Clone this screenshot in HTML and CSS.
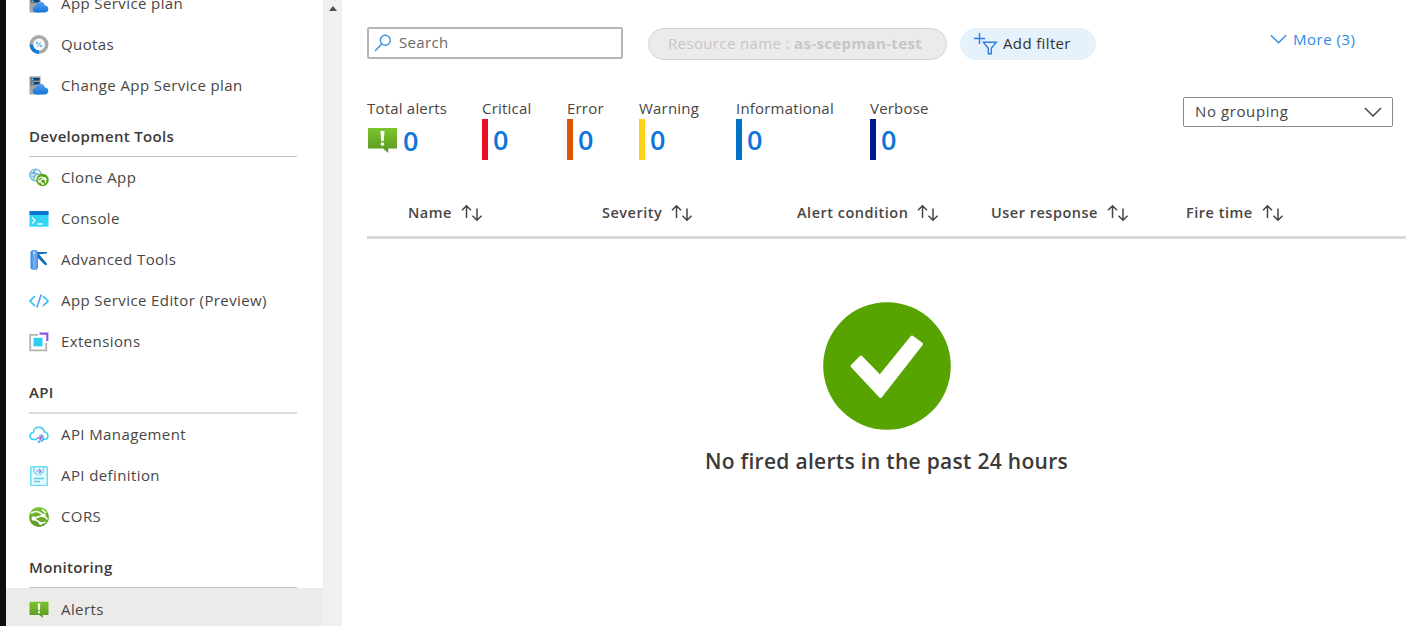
FILE: index.html
```html
<!DOCTYPE html>
<html lang="en">
<head>
<meta charset="utf-8">
<title>Alerts</title>
<link rel="stylesheet" href="styles.css">
</head>
<body>
<svg class="defs" width="0" height="0" aria-hidden="true">
  <defs>
    <linearGradient id="cloud" x1="0" y1="0" x2="0" y2="1"><stop offset="0" stop-color="#5ea0ef"/><stop offset="1" stop-color="#0f75d8"/></linearGradient>
    <linearGradient id="green" x1="0" y1="0" x2="0" y2="1"><stop offset="0" stop-color="#7ac52c"/><stop offset="1" stop-color="#5c9624"/></linearGradient>
    <linearGradient id="tube" x1="0" y1="0" x2="1" y2="0"><stop offset="0" stop-color="#2f7fe0"/><stop offset=".5" stop-color="#7db4f5"/><stop offset="1" stop-color="#3f8be6"/></linearGradient>
    <linearGradient id="steel" x1="0" y1="0" x2="0" y2="1"><stop offset="0" stop-color="#8a8d90"/><stop offset="1" stop-color="#a9abad"/></linearGradient>
    <symbol id="plan" viewBox="0 0 20 20">
      <path d="M.5 .5h11v18H.5z" fill="url(#steel)"/><path d="M2 2h8.500v2.500H2zM2 6h8.500v2.500H2z" fill="#143e6b"/><path d="M2.500 2.500h2v1.500h-2zM2.500 6.500h2v1.500h-2z" fill="#50e6ff"/>
      <path d="M7.500 18.500C5 18.500 3.800 16.900 3.800 15.200c0-1.900 1.300-3 3-3.200C7.400 9.200 9.300 7.800 11.500 7.800c2.400 0 4 1.500 4.500 3.800 2 .2 3.300 1.500 3.300 3.400 0 2-1.500 3.500-3.600 3.500z" fill="url(#cloud)"/>
    </symbol>
    <symbol id="alert" viewBox="0 0 30 26">
      <path d="M.5 1h29v20.500h-8.700V26l-5.300-4.500H.5z" fill="url(#green)"/><path d="M13 4h4l-.7 10h-2.600zM13.400 15.500h3.200v3.100h-3.200z" fill="#fff"/>
    </symbol>
    <symbol id="sort" viewBox="0 0 22 18">
      <path d="M5.500 14V2M1 6.200 5.500 1.700 10 6.200M16 4.500v11.500M11.500 11.800l4.500 4.500 4.500-4.500" fill="none" stroke="#444" stroke-width="1.500"/>
    </symbol>
    <symbol id="chev" viewBox="0 0 18 10"><path d="M1 1l8 8 8-8" fill="none" stroke="currentColor" stroke-width="1.500"/></symbol>
  </defs>
</svg>
<div class="app">
  <div class="edge"></div>
  <nav class="side">
    <div class="items first">
      <a class="item"><svg class="ico"><use href="#plan"/></svg><span>App Service plan</span></a>
      <a class="item"><svg class="ico" viewBox="0 0 20 20"><circle cx="10" cy="9.500" r="7.700" fill="none" stroke="#a9a9a9" stroke-width="3.600"/><path d="M2.300 9.500A7.700 7.700 0 0 0 10 17.200" fill="none" stroke="#0f7bd8" stroke-width="3.600"/><path d="M11.800 6.800 8.200 12" stroke="#4aa7ee"/><circle cx="8" cy="8" r="1" fill="none" stroke="#4aa7ee" stroke-width=".9"/><circle cx="12" cy="10.900" r="1" fill="none" stroke="#4aa7ee" stroke-width=".9"/></svg><span>Quotas</span></a>
      <a class="item"><svg class="ico"><use href="#plan"/></svg><span>Change App Service plan</span></a>
    </div>
    <h2 class="group">Development Tools</h2>
    <div class="items">
      <a class="item"><svg class="ico" viewBox="0 0 20 20"><circle cx="6.500" cy="7" r="5.700" fill="#fff" stroke="#76b9dc" stroke-width="1.500"/><path d="M1.500 6.500 7 2M4 11.500l3.500-6 4 1.500M2 8l4 .5" fill="none" stroke="#76b9dc" stroke-width="1.500"/><circle cx="5" cy="5" r="1.600" fill="#59aed8"/><circle cx="13.500" cy="12" r="6.200" fill="#5aa51c"/><path d="M8.500 11.500c3-3.500 5.500-3 9 .5M10 13.200l4.500-2.700M10 13.200l4.500 3M16.300 11.500l.2 3.500" fill="none" stroke="#fff" stroke-width="1.100"/><circle cx="10.500" cy="13.200" r="1.300" fill="#fff"/><circle cx="16" cy="11" r="1.400" fill="#fff"/><circle cx="14" cy="16" r="1" fill="#fff"/></svg><span>Clone App</span></a>
      <a class="item"><svg class="ico" viewBox="0 0 20 20"><path d="M.5 2.500h19v15.200H.5z" fill="#32d4f5"/><path d="M.5 2h19v4H.5z" fill="#0f75d0"/><path d="M3 8.500l3 3-3 3M8.500 15h5" fill="none" stroke="#fff" stroke-width="1.300"/></svg><span>Console</span></a>
      <a class="item"><svg class="ico" viewBox="0 0 20 20"><path d="M7 2h11v1.500L10 4.300l8.500 10-2.300 1L8 7z" fill="#0f6cbd"/><rect x="1.500" width="7.500" height="20" rx="3" fill="url(#tube)"/><circle cx="5.200" cy="3" r="1.300" fill="#b9dafa"/></svg><span>Advanced Tools</span></a>
      <a class="item"><svg class="ico" viewBox="0 0 20 20" fill="none"><path d="M6 5 1 10l5 5M14 5l5 5-5 5" stroke="#35bfec" stroke-width="1.700"/><path d="M12.200 3.500 7.800 16.500" stroke="#5a9ff0" stroke-width="1.700"/></svg><span>App Service Editor (Preview)</span></a>
      <a class="item"><svg class="ico" viewBox="0 0 20 20"><path d="M9 2.800H1.200v15.500h16V11" fill="none" stroke="#b1b1b1" stroke-width="1.800"/><path d="M4.500 5.800h9v8.600h-9z" fill="#2ccff0"/><path d="M10.500 1.700H18.300V9" fill="none" stroke="#8f56dc" stroke-width="2.200"/></svg><span>Extensions</span></a>
    </div>
    <h2 class="group tall">API</h2>
    <div class="items">
      <a class="item"><svg class="ico" viewBox="0 0 20 20" fill="none"><path d="M8 14.500H5C2.600 14.500 1 13 1 11s1.400-3.400 3.300-3.600C4.700 4.300 6.900 2.300 9.800 2.300c3 0 4.900 1.800 5.400 4.500 2.300.3 3.700 1.800 3.700 3.900 0 2.200-1.600 3.800-3.900 3.800h-1" stroke="#35cdec" stroke-width="1.500"/><path d="M7.500 13h5M10.300 10.500l2.500 2.500-2.500 2.500" stroke="#a070dc" stroke-width="1.300"/><path d="M11.500 10c3.800.3 3.800 6-.2 6.300" stroke="#4fa6e9" stroke-width="1.300"/><circle cx="9.800" cy="17" r="1.200" fill="#4fc5ed"/></svg><span>API Management</span></a>
      <a class="item"><svg class="ico" viewBox="0 0 20 20" fill="none"><rect x="1.800" y=".8" width="16.500" height="18.700" rx="1" fill="#e6fafe" stroke="#6bdcf1" stroke-width="1.500"/><path d="M5 1v5l4 3M14.500 1v5l-4 3" stroke="#6bdcf1" stroke-width="1.400"/><path d="M7 5h5M10 3l2.300 2.200L10 7.300" stroke="#9b83dc" stroke-width="1.200"/><path d="M5 12.500h10M5 15.500h6" stroke="#5dcaea" stroke-width="1.400"/></svg><span>API definition</span></a>
      <a class="item"><svg class="ico" viewBox="0 0 20 20"><circle cx="10" cy="10" r="10" fill="url(#green)"/><path d="M2 6.500C6 3 10 4 14.500 8.500M4.500 11.500l9-3M4.500 11.500l8 5M15 8.500l3.500 4M13 2.500 17 6M12.500 16.500l4-1.500" fill="none" stroke="#fff" stroke-width="1.500"/><circle cx="14.500" cy="8.500" r="2.100" fill="#fff"/><circle cx="4.700" cy="11.500" r="2.200" fill="#fff"/><circle cx="11.500" cy="16.300" r="1.600" fill="#fff"/></svg><span>CORS</span></a>
    </div>
    <h2 class="group">Monitoring</h2>
    <a class="item active"><svg class="ico small"><use href="#alert"/></svg><span>Alerts</span></a>
  </nav>
  <div class="scroll"><i></i></div>
  <main class="main">
    <div class="toolbar">
      <div class="search"><svg width="18" height="18" viewBox="0 0 18 18" fill="none" stroke="#3795e4" stroke-width="1.400"><circle cx="11.300" cy="6.300" r="5"/><path d="M7.800 9.800 1 17"/></svg><span>Search</span></div>
      <div class="pill res"><span>Resource name : </span><b>as-scepman-test</b></div>
      <div class="pill add"><svg width="25" height="22" viewBox="0 0 25 22" fill="none" stroke="#2f7de1" stroke-width="1.400"><path d="M6.500 0v11M1 5.500h11M10.300 9.200h13l-5 6v5.500h-3v-5.500z"/></svg><span>Add filter</span></div>
      <div class="more"><svg width="17" height="10"><use href="#chev"/></svg><span>More (3)</span></div>
    </div>
    <div class="summary">
      <div class="stats">
        <div class="stat total"><span>Total alerts</span><div class="num"><svg width="31" height="26"><use href="#alert"/></svg><b>0</b></div></div>
        <div class="stat critical"><span>Critical</span><div class="num"><b>0</b></div></div>
        <div class="stat error"><span>Error</span><div class="num"><b>0</b></div></div>
        <div class="stat warning"><span>Warning</span><div class="num"><b>0</b></div></div>
        <div class="stat info"><span>Informational</span><div class="num"><b>0</b></div></div>
        <div class="stat verbose"><span>Verbose</span><div class="num"><b>0</b></div></div>
      </div>
      <div class="select"><span>No grouping</span><svg width="18" height="10"><use href="#chev"/></svg></div>
    </div>
    <div class="thead">
      <div><span>Name</span><svg class="sort"><use href="#sort"/></svg></div>
      <div><span>Severity</span><svg class="sort"><use href="#sort"/></svg></div>
      <div><span>Alert condition</span><svg class="sort"><use href="#sort"/></svg></div>
      <div><span>User response</span><svg class="sort"><use href="#sort"/></svg></div>
      <div><span>Fire time</span><svg class="sort"><use href="#sort"/></svg></div>
    </div>
    <div class="empty">
      <svg width="128" height="128" viewBox="0 0 128 128"><circle cx="64" cy="64" r="63.800" fill="#57a300"/><path d="M38 55 57 74.500 89 35 98.500 42 57.500 94.500 29 64z" fill="#fff" stroke="#fff" stroke-width="3" stroke-linejoin="round"/></svg>
      <p>No fired alerts in the past 24 hours</p>
    </div>
  </main>
</div>
</body>
</html>
```

FILE: styles.css
```css
* { box-sizing: border-box; }
body { margin: 0; height: 626px; overflow: hidden; background: #fff; color: #484644; font: 15px/20px "Open Sans", "Noto Sans", sans-serif; }
.defs { display: block; height: 0; }
.app { display: flex; height: 626px; overflow: hidden; }
.edge { width: 6px; background: #0d0d0d; }
.side { width: 317px; flex: none; letter-spacing: .4px; }
.items.first { margin-top: -17px; }
.item { display: flex; align-items: center; gap: 12px; height: 41px; padding-left: 23px; white-space: nowrap; }
.item span { padding-bottom: 2px; }
.ico { width: 20px; height: 20px; flex: none; }
.ico.small { height: 17px; }
.group { margin: 0 26px 0 23px; height: 51px; padding-top: 20px; border-bottom: 1px solid #c4c4c4; font-size: 15px; line-height: 20px; font-weight: 600; color: #3b3a39; letter-spacing: .33px; }
.group.tall { height: 52px; border-bottom: 2px solid #dcdcdc; }
.item.active { height: 43px; background: #edebe9; }
.scroll { width: 19px; flex: none; background: #f0f0f0; }
.scroll i { display: block; margin: 6px auto 0; width: 8px; border: 4px solid transparent; border-top: 0; border-bottom: 5px solid #505050; }
.main { flex: 1; padding: 26px 15px 0 25px; }
.toolbar { display: flex; height: 34px; letter-spacing: .36px; }
.search { display: flex; align-items: center; gap: 7px; width: 256px; height: 32px; margin-top: 1px; padding: 0 5px; border: 2px solid #b8b6b4; border-radius: 2px; color: #6b6967; }
.search span { margin-top: -3px; }
.pill { display: flex; align-items: center; height: 32px; margin-top: 2px; border-radius: 16px; white-space: pre; }
.pill span, .pill b { padding-bottom: 2px; }
.res { width: 299px; margin-left: 25px; padding-left: 19px; border: 1px solid #d4d4d4; background: #ebebeb; color: #c8c6c4; }
.add { width: 136px; margin-left: 13px; padding-left: 13px; gap: 5px; background: #e5f1fb; color: #323130; }
.more { display: flex; align-items: center; gap: 6px; height: 28px; margin-left: 174px; color: #2f8be0; white-space: nowrap; letter-spacing: .5px; }
.more svg { margin-top: -3px; }
.more span { padding-bottom: 2px; }
.summary { display: flex; justify-content: space-between; margin-top: 37px; height: 66px; padding-right: 13px; }
.stats { display: grid; grid-template-columns: 115px 85px 72px 97px 134px 70px; }
.stat { white-space: nowrap; letter-spacing: .2px; }
.stat > span { display: block; height: 22px; line-height: 22px; }
.num { display: flex; align-items: center; height: 41px; padding-left: 5px; border-left: 6px solid; font-size: 27px; line-height: 41px; color: #0f75d8; }
.num b { font-weight: 600; }
.total .num { padding: 1px 0 0; border: 0; gap: 5px; }
.critical .num { border-left-color: #e81123; }
.error .num { border-left-color: #db5400; }
.warning .num { border-left-color: #fcd116; }
.info .num { border-left-color: #0072c6; }
.verbose .num { border-left-color: #00188f; }
.select { display: flex; align-items: center; justify-content: space-between; width: 210px; height: 30px; padding: 0 10px 0 11px; border: 1px solid #8a8886; border-radius: 2px; color: #484644; letter-spacing: .6px; }
.select span { padding-bottom: 2px; }
.thead { display: grid; grid-template-columns: 194px 195px 194px 195px 1fr; align-items: center; height: 76px; padding: 37px 0 11px 41px; border-bottom: 3px solid #d8d8d8; font-size: 14.500px; font-weight: 600; color: #484644; letter-spacing: .5px; }
.thead div { display: flex; align-items: center; gap: 9px; white-space: nowrap; }
.sort { width: 22px; height: 18px; }
.empty { display: flex; flex-direction: column; align-items: center; padding-top: 63px; }
.empty p { margin: 16px 0 0; font-size: 21px; line-height: 30px; font-weight: 600; color: #3b3a39; letter-spacing: .3px; }
```
